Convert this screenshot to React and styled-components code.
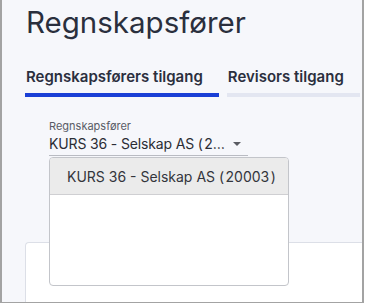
import React from 'react';
import styled, { createGlobalStyle } from 'styled-components';

const GlobalStyle = createGlobalStyle`
  html, body {
    margin: 0;
    padding: 0;
    background: #ffffff;
  }
  body {
    font-family: Inter, "Noto Sans", "Liberation Sans", sans-serif;
  }
`;

const Frame = styled.div`
  box-sizing: border-box;
  width: 364px;
  height: 303px;
  border-left: 2px solid #a3a3a3;
  border-right: 2px solid #a3a3a3;
  border-bottom: 1px solid #a3a3a3;
  background: #f6f7fb;
  overflow: hidden;
  display: flex;
  flex-direction: column;
`;

const Header = styled.div`
  padding: 4px 0 0 24px;
`;

const Title = styled.h1`
  margin: 0;
  font-size: 29.5px;
  line-height: 36px;
  font-weight: 400;
  color: #2a2f3d;
`;

const Tabs = styled.div`
  display: flex;
  gap: 8px;
  margin: 27px 0 0 23px;
`;

const Tab = styled.div`
  padding: 0 16px 6px 1px;
  font-size: 15px;
  line-height: 20px;
  font-weight: 600;
  color: #2b2f3e;
  border-bottom: 4px solid ${(p) => (p.$active ? '#1a3fd6' : '#e3e6f1')};
  white-space: nowrap;
`;

const Content = styled.div`
  flex: 1;
  display: flex;
  flex-direction: column;
  padding-left: 23px;
`;

const Field = styled.div`
  position: relative;
  width: 199px;
  margin: 22px 0 0 24px;
  z-index: 2;
`;

const Label = styled.div`
  font-size: 11px;
  line-height: 14px;
  color: #595c66;
`;

const SelectBox = styled.div`
  display: flex;
  align-items: center;
  gap: 4px;
  margin-top: 1px;
  padding-bottom: 1px;
  border-bottom: 1px solid #b9bbc2;
`;

const Value = styled.div`
  flex: 1;
  min-width: 0;
  font-size: 14px;
  line-height: 20px;
  letter-spacing: -0.15px;
  color: #2b2d35;
  white-space: nowrap;
  overflow: hidden;
  text-overflow: ellipsis;
`;

const Paren = styled.span`
  margin: ${(p) => (p.$open ? '0 1.5px 0 0' : '0 0 0 1.5px')};
`;

const Caret = styled.span`
  width: 0;
  height: 0;
  margin-right: 7px;
  border-left: 4px solid transparent;
  border-right: 4px solid transparent;
  border-top: 4px solid #5a5c63;
`;

const Menu = styled.div`
  position: absolute;
  left: 0;
  top: 100%;
  margin-top: 1px;
  box-sizing: border-box;
  width: 240px;
  height: 129px;
  background: #ffffff;
  border: 1px solid #c3c5ca;
  border-radius: 4px;
  overflow: hidden;
`;

const Option = styled.div`
  height: 37px;
  box-sizing: border-box;
  padding-left: 17px;
  display: flex;
  align-items: center;
  font-size: 14px;
  color: #33353c;
  background: ${(p) => (p.$selected ? '#ebebeb' : '#ffffff')};
  border-bottom: 1px solid #cfcfd2;
  white-space: pre;
`;

const Card = styled.div`
  flex: 1;
  margin-top: 86px;
  background: #ffffff;
  border: 1px solid #dcdfe7;
  border-right: none;
  border-bottom: none;
  border-top-left-radius: 4px;
`;

const Company = () => (
  <>
    {'KURS 36 - Selskap AS '}
    <Paren $open>(</Paren>
    20003
    <Paren>)</Paren>
  </>
);

export default function App() {
  return (
    <>
      <GlobalStyle />
      <Frame>
        <Header>
          <Title>Regnskapsfører</Title>
        </Header>
        <Tabs>
          <Tab $active>Regnskapsførers tilgang</Tab>
          <Tab>Revisors tilgang</Tab>
        </Tabs>
        <Content>
          <Field>
            <Label>Regnskapsfører</Label>
            <SelectBox>
              <Value>
                <Company />
              </Value>
              <Caret />
            </SelectBox>
            <Menu>
              <Option $selected>
                <Company />
              </Option>
            </Menu>
          </Field>
          <Card />
        </Content>
      </Frame>
    </>
  );
}
